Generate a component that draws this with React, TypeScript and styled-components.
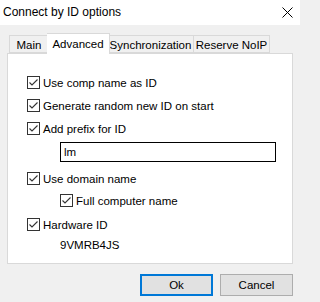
import React from "react";
import styled, { createGlobalStyle } from "styled-components";

const GlobalStyle = createGlobalStyle`
  html, body {
    margin: 0;
    padding: 0;
    background: #f0f0f0;
  }
  body {
    font-family: "Liberation Sans", Arial, sans-serif;
    font-size: 11.5px;
    color: #000;
  }
`;

const StyledWindow = styled.div`
  width: 300px;
  height: 302px;
  display: flex;
  flex-direction: column;
  background: #f0f0f0;
  overflow: hidden;
`;

const StyledTitleBar = styled.div`
  height: 25px;
  flex: none;
  background: #fff;
  display: flex;
  align-items: center;
  justify-content: space-between;
  padding: 0 6px 0 3px;
  box-sizing: border-box;
`;

const StyledTitle = styled.span`
  font-size: 12px;
  line-height: 1;
  margin-top: -1px;
`;

const StyledClose = styled.svg`
  width: 11px;
  height: 11px;
  margin-top: -1px;
  margin-right: 1px;
`;

const StyledBody = styled.div`
  flex: 1;
  padding: 8px 7px 0 7px;
  display: flex;
  flex-direction: column;
`;

const StyledTabs = styled.div`
  display: flex;
  align-items: flex-end;
  padding-left: 2px;
  height: 20px;
  position: relative;
  z-index: 1;
`;

const StyledTab = styled.div<{ $active?: boolean; $w: number }>`
  box-sizing: border-box;
  width: ${({ $w, $active }) => ($active ? $w + 4 : $w)}px;
  height: ${({ $active }) => ($active ? "21px" : "18px")};
  margin: ${({ $active }) => ($active ? "0 -2px -1px -2px" : "0")};
  padding-top: ${({ $active }) => ($active ? "0" : "1px")};
  background: ${({ $active }) => ($active ? "#fff" : "#f0f0f0")};
  border: 1px solid #d9d9d9;
  border-bottom: ${({ $active }) => ($active ? "none" : "1px solid #d9d9d9")};
  display: flex;
  align-items: center;
  justify-content: center;
  white-space: nowrap;
  position: relative;
  z-index: ${({ $active }) => ($active ? 2 : 1)};

  & + & {
    border-left: ${({ $active }) => ($active ? "1px solid #d9d9d9" : "none")};
  }
`;

const StyledPanel = styled.div`
  box-sizing: border-box;
  height: 211px;
  background: #fff;
  border: 1px solid #d9d9d9;
  padding: 22px 0 0 19px;
  display: flex;
  flex-direction: column;
  align-items: flex-start;
`;

const StyledRow = styled.label<{ $top: number; $indent?: number }>`
  display: flex;
  align-items: center;
  height: 13px;
  margin-top: ${({ $top }) => $top}px;
  margin-left: ${({ $indent }) => $indent ?? 0}px;
  white-space: nowrap;
`;

const StyledBox = styled.span`
  width: 13px;
  height: 13px;
  box-sizing: border-box;
  border: 1px solid #333;
  background: #fff;
  display: flex;
  align-items: center;
  justify-content: center;
  margin-right: 3px;
  flex: none;
`;

const StyledInput = styled.div`
  box-sizing: border-box;
  width: 216px;
  height: 20px;
  margin: 7px 0 0 33px;
  border: 1px solid #000;
  padding: 0 3px;
  display: flex;
  align-items: center;
`;

const StyledValue = styled.div`
  margin: 8px 0 0 33px;
  line-height: 12px;
`;

const StyledFooter = styled.div`
  display: flex;
  justify-content: flex-end;
  gap: 7px;
  margin-top: 10px;
`;

const StyledButton = styled.div<{ $default?: boolean }>`
  box-sizing: border-box;
  width: 73px;
  height: 22px;
  background: #e1e1e1;
  border: ${({ $default }) =>
    $default ? "2px solid #0078d7" : "1px solid #adadad"};
  display: flex;
  align-items: center;
  justify-content: center;
`;

const CheckMark = () => (
  <svg width="11" height="11" viewBox="0 0 11 11">
    <polyline
      points="1.5,5.5 4,8 9.5,2.5"
      fill="none"
      stroke="#333"
      strokeWidth="1.1"
    />
  </svg>
);

const Check: React.FC<{
  label: string;
  top: number;
  indent?: number;
}> = ({ label, top, indent }) => (
  <StyledRow $top={top} $indent={indent}>
    <StyledBox>
      <CheckMark />
    </StyledBox>
    {label}
  </StyledRow>
);

const tabs = [
  { label: "Main", w: 40 },
  { label: "Advanced", w: 59, active: true },
  { label: "Synchronization", w: 86 },
  { label: "Reserve NoIP", w: 76 },
];

const App = () => (
  <StyledWindow>
    <GlobalStyle />
    <StyledTitleBar>
      <StyledTitle>Connect by ID options</StyledTitle>
      <StyledClose viewBox="0 0 11 11">
        <path d="M0.5 0.5 L10.5 10.5 M10.5 0.5 L0.5 10.5" stroke="#000" strokeWidth="1" />
      </StyledClose>
    </StyledTitleBar>
    <StyledBody>
      <StyledTabs>
        {tabs.map((t) => (
          <StyledTab key={t.label} $w={t.w} $active={t.active}>
            {t.label}
          </StyledTab>
        ))}
      </StyledTabs>
      <StyledPanel>
        <Check label="Use comp name as ID" top={0} />
        <Check label="Generate random new ID on start" top={10} />
        <Check label="Add prefix for ID" top={10} />
        <StyledInput>lm</StyledInput>
        <Check label="Use domain name" top={10} />
        <Check label="Full computer name" top={9} indent={33} />
        <Check label="Hardware ID" top={11} />
        <StyledValue>9VMRB4JS</StyledValue>
      </StyledPanel>
      <StyledFooter>
        <StyledButton $default>Ok</StyledButton>
        <StyledButton>Cancel</StyledButton>
      </StyledFooter>
    </StyledBody>
  </StyledWindow>
);

export default App;
